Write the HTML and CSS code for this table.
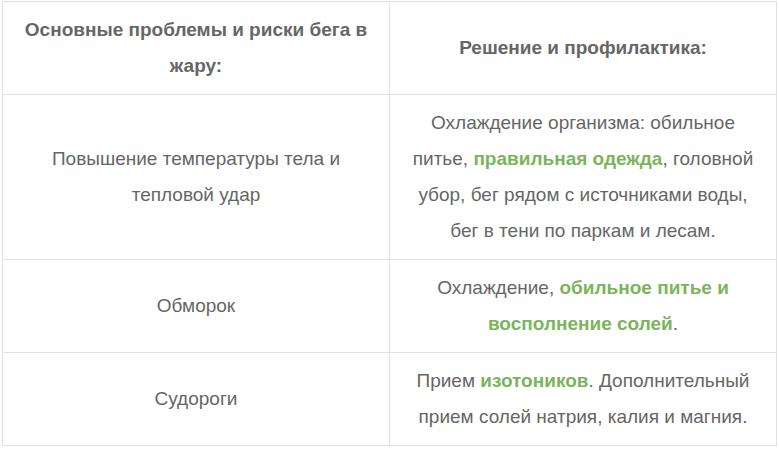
FILE: index.html
```html
<!DOCTYPE html>
<html lang="ru">
<head>
<meta charset="utf-8">
<title>Бег в жару</title>
<link rel="stylesheet" href="styles.css">
</head>
<body>
<table class="tbl">
  <thead>
    <tr>
      <th>Основные проблемы и риски бега в жару:</th>
      <th>Решение и профилактика:</th>
    </tr>
  </thead>
  <tbody>
    <tr>
      <td>Повышение температуры тела и тепловой удар</td>
      <td>Охлаждение организма: обильное питье, <b class="hl">правильная одежда</b>, головной убор, бег рядом с источниками воды, бег в тени по паркам и лесам.</td>
    </tr>
    <tr>
      <td>Обморок</td>
      <td>Охлаждение, <b class="hl">обильное питье и восполнение солей</b>.</td>
    </tr>
    <tr>
      <td>Судороги</td>
      <td>Прием <b class="hl">изотоников</b>. Дополнительный прием солей натрия, калия и магния.</td>
    </tr>
  </tbody>
</table>
</body>
</html>
```
FILE: styles.css
```css
html, body {
  margin: 0;
  background: #fff;
}
body {
  padding: 1px 2px;
  font-family: "Liberation Sans", Arial, sans-serif;
  font-size: 19px;
  color: #666;
}
.tbl {
  width: 775px;
  border-collapse: collapse;
  table-layout: fixed;
}
.tbl th, .tbl td {
  width: 50%;
  border: 1px solid #e1e1e1;
  padding: 10px 15px;
  line-height: 36px;
  text-align: center;
  vertical-align: middle;
}
.tbl th {
  font-weight: bold;
}
.hl {
  color: #7ab55c;
  font-weight: bold;
}
```
